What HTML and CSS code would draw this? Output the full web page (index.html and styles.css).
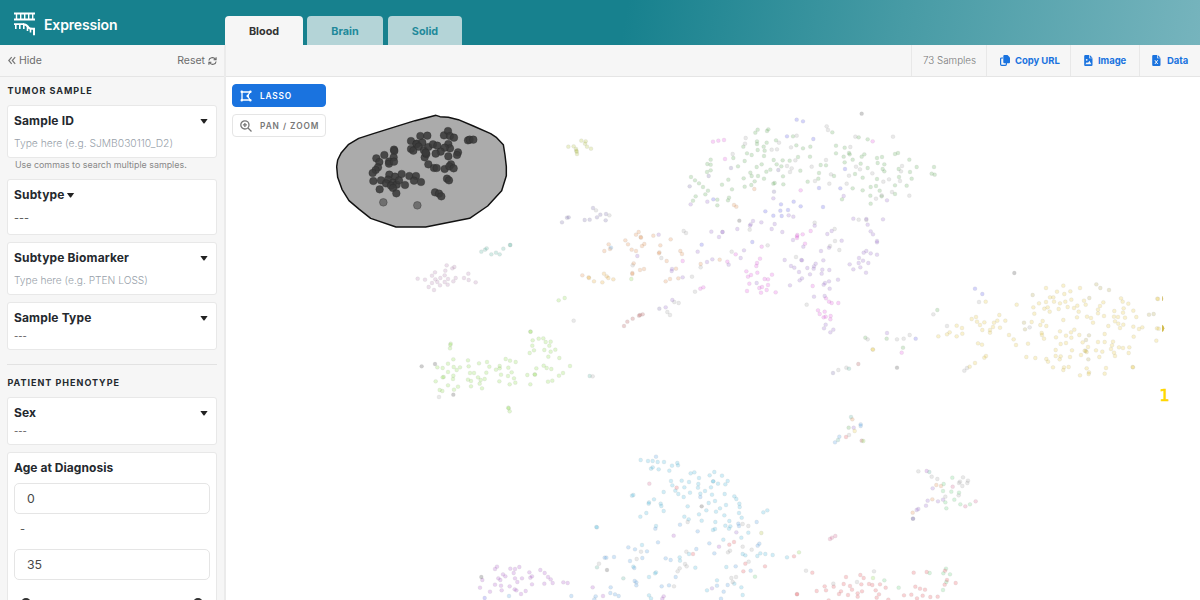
FILE: index.html
```html
<!DOCTYPE html>
<html lang="en">
<head>
<meta charset="utf-8">
<title>Expression</title>
<link rel="stylesheet" href="styles.css">
</head>
<body>
<div class="app">
  <header class="header">
    <div class="brand">
      <svg class="logo" width="24" height="24" viewBox="0 0 24 24" fill="none" stroke="#fff">
        <path d="M1 1.500H22M1 7.500H22M1 12.200H11" stroke-width="1.800"/>
        <path d="M3.500 1v7M7.700 1v7M11.700 1v7M15.700 1v7M19.700 1v7" stroke-width="1.400"/>
        <path d="M10 12.200c3.500 0 4.500 1.300 5.500 3.300.6 1.200 1.300 1.400 5.500 1.200v6.500" stroke-width="2"/>
        <path d="M2.800 12v5M6.800 12v5M10.800 12v5M14.500 14v5M17.500 16.500v4" stroke-width="1.600"/>
      </svg>
      <h1 class="brand-name">Expression</h1>
    </div>
    <nav class="tabs">
      <a class="tab tab-blood active">Blood</a>
      <a class="tab tab-brain">Brain</a>
      <a class="tab tab-solid">Solid</a>
    </nav>
  </header>
  <div class="body">
    <aside class="sidebar">
      <div class="side-top">
        <span class="hide"><svg width="8" height="9" viewBox="0 0 8 9" fill="none" stroke="#777" stroke-width="1.200"><path d="M3.700 1.200.8 4.500l2.900 3.300M7.200 1.200 4.300 4.500l2.900 3.300"/></svg><span>Hide</span></span>
        <span class="reset"><span>Reset</span><svg width="9" height="10" viewBox="0 0 10 10" fill="none" stroke="#666" stroke-width="1.200"><path d="M1 4.500C1.300 1 6.200.2 8.200 3M9 5.500C8.700 9 3.800 9.800 1.800 7M9 .8v2.800H6.200M1 9.200V6.400h2.800"/></svg></span>
      </div>
      <div class="filters">
        <h2 class="group">TUMOR SAMPLE</h2>
        <section class="card c-id">
          <h3 class="title"><span>Sample ID</span><i class="caret"></i></h3>
          <p class="placeholder">Type here (e.g. SJMB030110_D2)</p>
        </section>
        <p class="help">Use commas to search multiple samples.</p>
        <section class="card c-subtype">
          <h3 class="title inline"><span>Subtype</span><i class="caret"></i></h3>
          <p class="dashes big">---</p>
        </section>
        <section class="card c-biomarker">
          <h3 class="title"><span>Subtype Biomarker</span><i class="caret"></i></h3>
          <p class="placeholder short">Type here (e.g. PTEN LOSS)</p>
        </section>
        <section class="card c-short">
          <h3 class="title"><span>Sample Type</span><i class="caret"></i></h3>
          <p class="dashes">---</p>
        </section>
        <hr class="rule">
        <h2 class="group">PATIENT PHENOTYPE</h2>
        <section class="card c-short">
          <h3 class="title"><span>Sex</span><i class="caret"></i></h3>
          <p class="dashes">---</p>
        </section>
        <section class="card c-age">
          <h3 class="title age"><span>Age at Diagnosis</span></h3>
          <div class="field">0</div>
          <div class="to">-</div>
          <div class="field">35</div>
          <div class="slider"><i class="thumb"></i><i class="thumb"></i></div>
        </section>
      </div>
    </aside>
    <main class="main">
      <div class="toolbar">
        <div class="cell samples"><span>73 Samples</span></div>
        <div class="cell link copy"><svg width="10" height="11" viewBox="0 0 10 11"><path fill="#1a73df" d="M4.300 0h3.200L10 2.400v4.800a1 1 0 0 1-1 1H4.300a1 1 0 0 1-1-1V1a1 1 0 0 1 1-1z"/><path fill="none" stroke="#1a73df" stroke-width="1.200" d="M3 3H1.600a1 1 0 0 0-1 1v5.300a1 1 0 0 0 1 1H5.400a1 1 0 0 0 1-1V8"/></svg><span>Copy URL</span></div>
        <div class="cell link image"><svg width="9" height="11" viewBox="0 0 9 11"><path fill="#1a73df" d="M1.300 0H5v3.300h3.500V9.700A1.200 1.200 0 0 1 7.300 11h-6A1.200 1.200 0 0 1 .2 9.700V1.200A1.200 1.200 0 0 1 1.300 0zM5.700 0 8.500 2.700H5.700z"/><circle cx="2.700" cy="4.800" r=".9" fill="#f6f6f6"/><path fill="#f6f6f6" d="M1.300 9.200 3 7l.9.900 1.500-2.200 2 3.500z"/></svg><span>Image</span></div>
        <div class="cell link data"><svg width="9" height="11" viewBox="0 0 9 11"><path fill="#1a73df" d="M1.300 0H5v3.300h3.500V9.700A1.200 1.200 0 0 1 7.300 11h-6A1.200 1.200 0 0 1 .2 9.700V1.200A1.200 1.200 0 0 1 1.300 0zM5.700 0 8.500 2.700H5.700z"/><path d="M2.900 5.200 5.700 9M5.700 5.200 2.900 9" stroke="#f6f6f6" stroke-width="1"/></svg><span>Data</span></div>
      </div>
      <div class="plot">
        <svg class="points" id="points" width="975" height="523" viewBox="225 77 975 523"></svg>
        <div class="modes">
          <button class="mode on"><svg width="12" height="12" viewBox="0 0 12 12" fill="none" stroke="#fff" stroke-width="1.300"><path d="M2 2h8.200L7.500 6l2.700 4H2z"/><path stroke-width="2.400" stroke-linecap="round" d="M1.700 1.700h.1M10.300 1.700h.1M1.700 10.300h.1M10.300 10.300h.1M7.700 6h.1"/></svg><span>LASSO</span></button>
          <button class="mode"><svg width="12" height="12" viewBox="0 0 12 12" fill="none" stroke="#777" stroke-width="1.300"><circle cx="4.900" cy="4.900" r="4.100"/><path d="M8 8l3.500 3.500M2.900 4.900h4M4.900 2.900v4"/></svg><span>PAN / ZOOM</span></button>
        </div>
      </div>
    </main>
  </div>
</div>
<script src="points.js"></script>
</body>
</html>
```
FILE: styles.css
```css
* { box-sizing: border-box; }
body { margin: 0; font-family: Inter, "Liberation Sans", sans-serif; background: #fff; color: #24292e; }
h1, h2, h3, p { margin: 0; }
.app { width: 1200px; height: 600px; overflow: hidden; display: flex; flex-direction: column; }
.header { height: 45px; flex: none; display: flex; background: linear-gradient(100deg, #17818e 0%, #17818e 52%, #479ba5 75%, #76b4bd 100%); }
.brand { width: 225px; padding: 12px 0 0 13px; display: flex; gap: 7px; }
.logo { display: block; }
.brand-name { font-size: 14px; line-height: 25px; font-weight: 600; color: #fff; letter-spacing: -.15px; white-space: nowrap; }
.tabs { display: flex; align-items: flex-end; }
.tab { height: 29px; border-radius: 4px 4px 0 0; background: #b4d4d7; color: #21899a; font-size: 10.800px; line-height: 32px; font-weight: 700; text-align: center; }
.tab.active { background: #f6f6f6; color: #333; }
.tab-blood { width: 78px; margin-right: 4px; }
.tab-brain { width: 76px; margin-right: 5px; }
.tab-solid { width: 74px; }
.body { display: flex; height: 555px; }
.sidebar { width: 226px; flex: none; height: 555px; overflow: hidden; background: #f6f6f6; border-right: 2px solid #ebebeb; }
.side-top { height: 32px; border-bottom: 1px solid #e5e5e5; padding: 0 7px 0 8px; display: flex; justify-content: space-between; align-items: center; font-size: 10.500px; color: #6d6d6d; }
.hide, .reset { display: flex; align-items: center; gap: 3px; }
.filters { padding: 8px 7px 0; }
.group { padding-left: .5px; margin-bottom: 9px; font-size: 9px; line-height: 11px; font-weight: 700; letter-spacing: 1px; white-space: nowrap; }
.card { background: #fff; border: 1px solid #e8e8e8; border-radius: 3px; padding: 6px 6px 0; width: 210px; }
.title { font-size: 12px; line-height: 18px; font-weight: 700; letter-spacing: .15px; display: flex; justify-content: space-between; align-items: center; white-space: nowrap; }
.title.inline { justify-content: flex-start; gap: 2px; }
.title.age { letter-spacing: .05px; margin-bottom: 6px; }
.caret { width: 8px; height: 5px; background: #222; clip-path: polygon(0 0, 100% 0, 55% 100%, 45% 100%); margin-right: 2px; }
.placeholder { font-size: 10.300px; line-height: 14px; font-weight: 300; color: #989faa; margin-top: 6px; white-space: nowrap; }
.placeholder.short { font-size: 10.200px; }
.help { font-size: 8.900px; line-height: 12px; color: #888; padding-left: 8px; margin: 1px 0 8px; white-space: nowrap; }
.dashes { font-size: 9.300px; line-height: 12px; color: #555; margin-top: 3px; }
.dashes.big { font-size: 10.800px; margin-top: 9px; }
.c-id { height: 53px; }
.c-subtype { height: 56px; margin-bottom: 7px; }
.c-biomarker { height: 53px; margin-bottom: 7px; }
.c-short { height: 48px; }
.rule { height: 1px; border: 0; margin: 14px 0 12px; background: #e2e2e2; width: 210px; }
.c-age { height: 180px; margin-top: 7px; }
.field { height: 31px; border: 1px solid #e5e5e5; border-radius: 5px; padding-left: 12px; font-size: 12.300px; line-height: 29px; color: #484848; }
.to { height: 35px; padding-left: 6px; font-size: 11px; line-height: 31px; color: #555; }
.slider { display: flex; justify-content: space-between; padding: 18px 7px 0; }
.thumb { width: 10px; height: 10px; border-radius: 50%; background: #333; }
.main { flex: 1; min-width: 0; }
.toolbar { height: 32px; background: #f6f6f6; border-bottom: 1px solid #e5e5e5; display: flex; justify-content: flex-end; }
.cell { border-left: 1px solid #e8e8e8; display: flex; align-items: center; font-size: 9.500px; white-space: nowrap; }
.samples { width: 75px; padding-left: 11px; font-size: 9.800px; font-weight: 300; color: #777; }
.link { color: #1a73df; font-weight: 700; padding-bottom: 1px; letter-spacing: -.06px; }
.copy { width: 84px; padding-left: 13px; gap: 5px; }
.image { width: 69px; padding-left: 13px; gap: 5px; }
.data { width: 61px; padding-left: 12px; gap: 6px; }
.plot { position: relative; width: 974px; height: 523px; }
.points { display: block; margin-left: -1px; }
.modes { position: absolute; left: 6px; top: 7px; display: flex; flex-direction: column; gap: 7px; }
.mode { width: 94px; height: 23px; border: 1px solid #e5e5e5; border-radius: 4px; background: #fff; color: #777; display: flex; align-items: center; gap: 8px; padding: 0 0 0 7px; font-family: Inter, sans-serif; font-size: 8.300px; font-weight: 600; letter-spacing: .95px; white-space: nowrap; }
.mode.on { background: #1a73df; border-color: #1a73df; color: #fff; letter-spacing: .85px; }
.pt { fill-opacity: .22; stroke: #888; stroke-opacity: .15; stroke-width: 2; }
.picked { fill: #3a3a3a; fill-opacity: .88; stroke: #222; stroke-opacity: .4; stroke-width: 2; }
.faded { fill: #333; fill-opacity: .5; stroke: #333; stroke-opacity: .6; stroke-width: 2; }
.lasso { fill: #ababab; stroke: #111; stroke-width: 4.400; stroke-linejoin: round; }
.count { font-family: "DejaVu Sans", sans-serif; font-size: 16px; fill: #ffd700; stroke: #ffd700; stroke-width: .7; }
```
FILE: points.js
```js
const NS = 'http://www.w3.org/2000/svg';
const root = document.getElementById('points');
const C = {
  green: '#45a03c', gray: '#999', pink: '#e235e0', blue: '#3b3be8', violet: '#8a50c8', slate: '#60529c',
  olive: '#a6b51c', orange: '#dd7d2c', amber: '#e59a18', rust: '#a33030', yellow: '#e5bd20', lime: '#77d52b',
  mauve: '#a86fa5', teal: '#3aa58b', cyan: '#29afdc', sky: '#348ddd', purple: '#a03cc5', red: '#e3303c',
  dark: '#222', rose: '#d04a80', mint: '#48c765', khaki: '#a69832'
};
function el(parent, tag, attrs) {
  const n = document.createElementNS(NS, tag);
  for (const k in attrs) n.setAttribute(k, attrs[k]);
  parent.appendChild(n);
  return n;
}
/* Each cluster has its own origin; coordinates inside it are in thirds of a pixel. */
function layer(x, y) {
  return el(root, 'g', { transform: `translate(${x} ${y}) scale(.33333)` });
}
function dots(g, list, cls, r, fill) {
  for (const p of list.trim().split(/\s+/)) {
    const [cx, cy] = p.split(',');
    const a = { cx, cy, r, class: cls };
    if (fill) a.fill = fill;
    el(g, 'circle', a);
  }
}
function cluster(x, y, groups) {
  const g = layer(x, y);
  for (const k in groups) dots(g, groups[k], 'pt', 5.8, C[k]);
}

cluster(540, 100, {
  olive: '85,140 101,139 124,122 137,124 135,131 141,140 153,146 108,147 109,152 110,155 111,162',
  slate: '66,367 81,353 86,352 134,360 149,359 159,324 171,352 181,344 198,342 197,361 358,626',
  gray: '168,331 208,346 364,474 278,496 101,662 382,636 390,645 403,606 416,609',
  orange: '193,453 206,433 210,447 256,421 264,433 275,449 288,453 288,404 296,396 302,411 303,413 313,432 306,438 340,407 361,436 358,457 357,460 392,418 380,483 281,490 277,519 277,522 300,510 312,507 377,544 390,537 408,506 415,535 127,526',
  amber: '146,532 147,534 162,544 187,547 192,521 200,529 205,534 220,538',
  sky: '213,443', violet: '292,468 356,404 396,507 395,513 397,600 377,622',
  lime: '56,601 74,594 274,537',
  rust: '252,678 262,665 278,656 297,647 300,645 308,643'
});

cluster(680, 100, {
  green: '226,98 233,89 261,93 265,88 190,140 201,160 215,165 231,124 231,132 233,150 251,140 254,152 252,168 260,128 288,121 339,109 349,136 369,145 391,140 390,170 354,171 329,182 308,181 281,180 290,193 304,199 245,193 230,201 194,183 174,199 160,174 92,179 82,192 92,194 92,211 81,216 33,231 45,241 57,250 69,261 84,272 76,283 47,289 39,302 112,299 112,316 126,254 145,239 156,268 147,293 144,301 191,235 194,260 211,218 215,228 234,228 224,244 214,255 252,236 259,215 271,209 280,251 284,249 309,229 310,253 361,212 383,245 415,236 417,219 422,195 438,196 462,228 457,97 468,137 468,160 494,143 491,170 494,187 507,159 509,163 518,179 536,112 563,118 545,170 553,163 542,191 525,222 518,265 548,233 548,271 563,204 591,174 606,171 593,189 613,193 608,207 613,214 591,237 588,258 572,261 571,287 572,311 599,272 605,289 645,162 654,159 688,179 710,201 690,216 695,236 680,257 645,256 645,282 656,207 657,231 486,298 762,201 755,221 764,224',
  gray: '197,114 195,131 158,162 275,149 291,148 297,128 350,107 333,142 346,181 321,198 335,205 330,216 395,200 405,243 453,223 448,251 438,180 440,79 444,90 511,141 526,110 500,251 507,227 528,200 540,208 577,220 610,245 627,238 636,276 660,243 666,198 663,214 688,287 639,110 588,296 605,286 404,368 464,387 465,423 450,438 478,450 348,471 263,436 209,389 155,455 11,393 18,399 62,502 36,530 45,575 380,614 536,359 559,360',
  pink: '99,125 115,122 132,120 135,177 578,124 362,271 8,483 167,463 142,485 70,562 61,566 245,440 352,405 351,409 351,414 368,403 392,393 375,431 240,476 231,489 229,498 232,518 199,514 204,530 213,525 208,551 201,573 243,578 238,564 246,561 254,537 264,538 276,524 264,555 260,570 287,577 398,558 438,595 447,605 455,609 475,609 414,631 419,642 434,635 431,652 437,650 452,648 451,658',
  blue: '350,59 369,64 321,109 400,117 495,207 417,264 481,265 100,298 303,313 341,305 362,319 429,321 256,334 301,332 324,330 280,347 305,348 65,434 217,426',
  violet: '32,313 82,305 280,295 326,346 340,350 491,288 621,301 94,395 117,411 127,396 128,396 172,387 219,363 212,373 210,377 244,367 284,372 275,387 307,396 339,420 370,440 404,377 442,402 455,393 485,422 447,443 423,453 430,481 407,491 402,499 401,506 382,504 390,523 357,516 366,535 359,541 330,556 314,480 333,498 343,503 364,480 366,481 427,509 425,521 448,510 474,539 447,544 435,549 431,554 449,566 402,590 434,588 437,674 432,685 460,689 451,697 520,356 559,357 609,358 563,374 572,394 579,403 591,423 591,427 559,453 551,458 572,460 591,464 537,474 549,482 536,489 565,489 541,502 520,508 509,493 558,518 230,549 192,451 182,474 146,494 97,478 81,486 53,455 8,532',
  slate: '29,259 86,228 153,204 295,210 282,275',
  orange: '223,267 162,315 169,320 1,453 6,462 62,492 119,479',
  dark: '545,41 178,362'
});

cluster(900, 260, {
  dark: '343,39', blue: '225,86 247,102', green: '112,150',
  gray: '100,163 237,126 141,198 389,202 193,332 201,324',
  khaki: '372,188 375,208 398,105 568,114 589,73 601,84 627,90 747,164 761,162 567,226 558,240 565,298 557,273',
  yellow: '257,125 215,177 228,171 231,185 240,195 253,187 247,210 270,210 270,218 279,201 282,188 292,182 300,203 298,165 316,182 350,134 170,197 186,204 187,221 170,229 149,217 141,223 115,229 234,250 246,254 258,288 253,293 225,309 209,320 327,225 341,238 348,255 384,251 395,186 379,291 406,294 438,84 490,77 471,95 493,102 511,94 540,84 450,112 460,112 438,126 417,130 400,142 403,161 433,146 443,142 449,155 462,125 480,130 496,125 514,119 476,147 503,141 522,144 532,137 536,155 552,122 557,134 531,172 561,170 573,174 579,188 610,127 600,138 594,149 594,160 612,168 663,115 668,125 685,131 671,145 669,158 700,152 643,153 642,170 654,171 675,173 645,184 655,191 670,194 660,204 625,198 709,171 700,200 717,207 727,202 490,180 428,183 421,195 439,198 425,219 426,225 432,236 468,232 480,214 513,217 523,209 498,227 514,233 538,225 498,249 482,252 467,270 516,271 548,247 564,261 554,272 560,276 543,285 510,291 482,289 467,288 479,298 439,297 444,305 459,322 492,322 490,330 506,321 540,346 560,325 567,337 566,342 614,341 618,324 598,291 588,271 607,275 594,246 614,246 614,222 639,245 636,256 633,267 642,278 645,288 657,262 669,264 688,262 686,279 701,230 698,321 699,322 769,242 772,116 774,117 771,205 776,206'
});

cluster(400, 230, {
  teal: '244,65 255,59 260,55 274,73 288,68 299,73 310,56 330,45 331,45 569,438',
  mauve: '53,146 75,149 86,171 102,180 96,159 106,148 112,156 120,166 96,137 105,127 121,144 134,136 136,122 140,106 157,115 163,111 134,156 143,164 144,147 160,154 167,144 192,144 205,131 206,150 227,157',
  gray: '117,501 578,439',
  dark: '65,409 105,402 160,494',
  lime: '391,305 392,305 398,331 397,347 389,369 402,361 416,326 430,325 437,336 452,335 448,347 433,360 452,365 466,359 445,380 478,384 431,407 440,414 454,417 409,415 404,433 405,434 382,435 391,463 444,455 457,452 477,437 489,429 510,408 152,341 151,345 150,355 160,388 144,401 112,412 128,414 144,426 161,411 170,420 180,412 160,437 159,447 131,441 128,442 107,454 144,466 119,480 127,483 162,479 174,470 204,391 206,409 210,429 222,429 234,442 204,449 213,453 213,469 239,461 242,450 254,447 246,475 237,400 261,396 268,410 259,428 288,419 299,408 299,415 303,434 298,454 317,387 330,392 347,396 325,413 335,427 324,438 342,445 346,458 329,463 325,533 326,535 329,544'
});

cluster(470, 445, {
  purple: '30,428 37,405 60,440 75,419 75,372 81,365 85,400 91,405 99,388 106,394 93,422 95,436 119,424 121,371 135,372 148,366 131,384 135,400 142,411 156,400 134,433 139,436 153,447 167,438 178,382 181,398 186,394 186,418 211,375 224,384 234,396 242,403 248,414 223,416 280,412 293,414 368,427 399,453',
  dark: '34,396 411,375', blue: '44,459',
  sky: '117,453 304,453 404,338 409,338 432,336 475,307 495,313 480,348 493,369 494,408 499,412 499,421 422,427 421,444 435,448 446,453 377,454 373,463',
  cyan: '379,246 381,247 486,152 490,150 490,365', gray: '387,356 500,342', teal: '381,367 460,400'
});

cluster(640, 445, {
  cyan: '2,45 24,48 38,48 53,51 72,51 38,67 33,71 56,73 96,62 88,77 112,54 114,61 152,85 163,82 177,99 93,108 125,107 147,111 97,121 106,137 115,147 133,127 131,156 150,143 175,117 174,128 181,146 195,138 213,127 216,149 209,91 223,81 246,92 263,108 256,118 219,109 220,109 234,116 254,147 283,154 289,162 298,176 299,186 297,204 305,218 258,180 240,190 228,200 199,196 206,174 225,168 253,211 268,228 271,244 267,251 256,242 226,231 225,252 219,255 185,227 177,208 143,184 71,141 42,163 27,172 26,176 62,176 64,183 71,198 19,204 1,215 6,300 48,243 133,215 146,223 370,202 382,196 325,263 304,278 250,284 308,327 316,331 361,325 352,333 376,327 398,330 441,337 147,327 119,337 120,347 166,368 259,366 27,396 45,385 48,382 231,406 201,436 304,427 283,416 308,450 27,451 33,460',
  sky: '48,35 46,251 120,239 173,259 54,292 21,319 7,339 77,340 92,345 208,295 223,325 169,312 295,236 297,243 350,231 358,296 353,302 287,364 332,377 263,420 251,440 231,422 243,461 107,396 87,421 65,424 181,156',
  purple: '101,272 237,305 71,454 67,461', rose: '28,116 570,282 576,278 586,273',
  red: '110,128 268,299 282,291 159,327 316,356 310,379 375,364 462,334 517,383 554,424 558,436 530,438 581,425 597,447 471,447 471,448 566,466',
  violet: '289,262 216,430',
  gray: '143,231 308,237 325,243 3,320 139,320 135,357 140,364 119,370 113,379 102,424 264,322 270,317 308,305 335,314 326,350 274,399 288,396 278,411 498,377 580,416',
  dark: '185,184', olive: '364,264', lime: '477,322', mint: '345,395'
});

cluster(790, 330, {
  violet: '291,9 191,293 428,475 413,512 444,514 459,509 408,527 380,540 385,537',
  green: '226,23 290,26 339,53 176,293',
  gray: '233,28 321,28 341,26 359,15 145,120 169,113 177,315 385,424 425,440 442,447 519,442 510,455 507,459 534,452 532,459 517,468 506,496 466,500 252,724 201,756',
  blue: '377,26', yellow: '248,58 249,59 194,303', pink: '335,68', dark: '321,113',
  teal: '177,116 183,261 144,330 418,426', slate: '129,129 369,566 369,566',
  rust: '205,102 215,332', orange: '187,268 439,465 453,468 427,508 368,548',
  sky: '212,283 212,288 148,320 135,337',
  mint: '487,443 461,462 459,483 484,485 507,488 466,517 493,509 469,535 511,523 540,523 283,751 326,773 419,729 460,730 480,733 468,716 469,756 459,780',
  purple: '410,423', rose: '488,470 526,529 557,514',
  red: '168,321 211,735 168,741 161,762 180,768 186,779 153,784 174,795 203,790 203,800 221,744 214,763 216,784 237,762 247,765 270,763 287,773 257,781 267,793 260,803 295,809 342,796 364,794 376,770 390,776 405,779 371,728 410,726 465,722 471,750 464,764 497,759 398,797 381,805 421,801 443,800',
  lime: '220,333 249,744'
});

const sel = layer(220, 0);
el(sel, 'path', { class: 'lasso', d: 'M648 346L660 350L685 352L715 359L760 378L812 401L830 413L850 434L855 465L859 500L859 527L845 572L803 618L749 655L617 681L528 681L452 655L418 628L387 602L366 568L353 532L350 500L353 480L364 458L386 433L416 415L460 401L520 382L585 362Z' });
dots(sel, '601,408 622,407 573,423 590,431 589,433 607,428 573,447 580,452 596,440 612,451 625,441 639,433 652,437 614,472 619,462 617,458 672,406 684,393 690,408 702,413 685,432 690,445 674,443 662,455 647,461 685,469 714,457 711,465 744,421 749,419 760,419 625,493 642,504 650,504 674,507 693,493 688,499 701,505 681,536 687,541 645,577 657,581 664,589 522,449 523,453 493,465 469,475 478,486 521,472 507,485 507,491 522,485 474,502 467,510 458,519 460,543 483,541 479,568 508,524 525,530 504,539 498,550 519,548 513,557 530,554 537,541 519,564 529,580 545,522 568,528 588,528 582,542 603,546 555,555', 'picked', 11.500);
dots(sel, '490,607 592,616', 'faded', 11.500);

/* Points cut off by the right edge of the canvas */
const edge = layer(900, 260);
el(edge, 'path', { d: 'M786 109h2q3 7 0 14h-2z', fill: '#c5aa3c', 'fill-opacity': .7 });
el(edge, 'path', { d: 'M786 194q6 2 7 11q-1 9-7 11z', fill: '#c5aa20', 'fill-opacity': .8 });
el(root, 'text', { x: 1159.500, y: 401, class: 'count' }).textContent = '1';
```
